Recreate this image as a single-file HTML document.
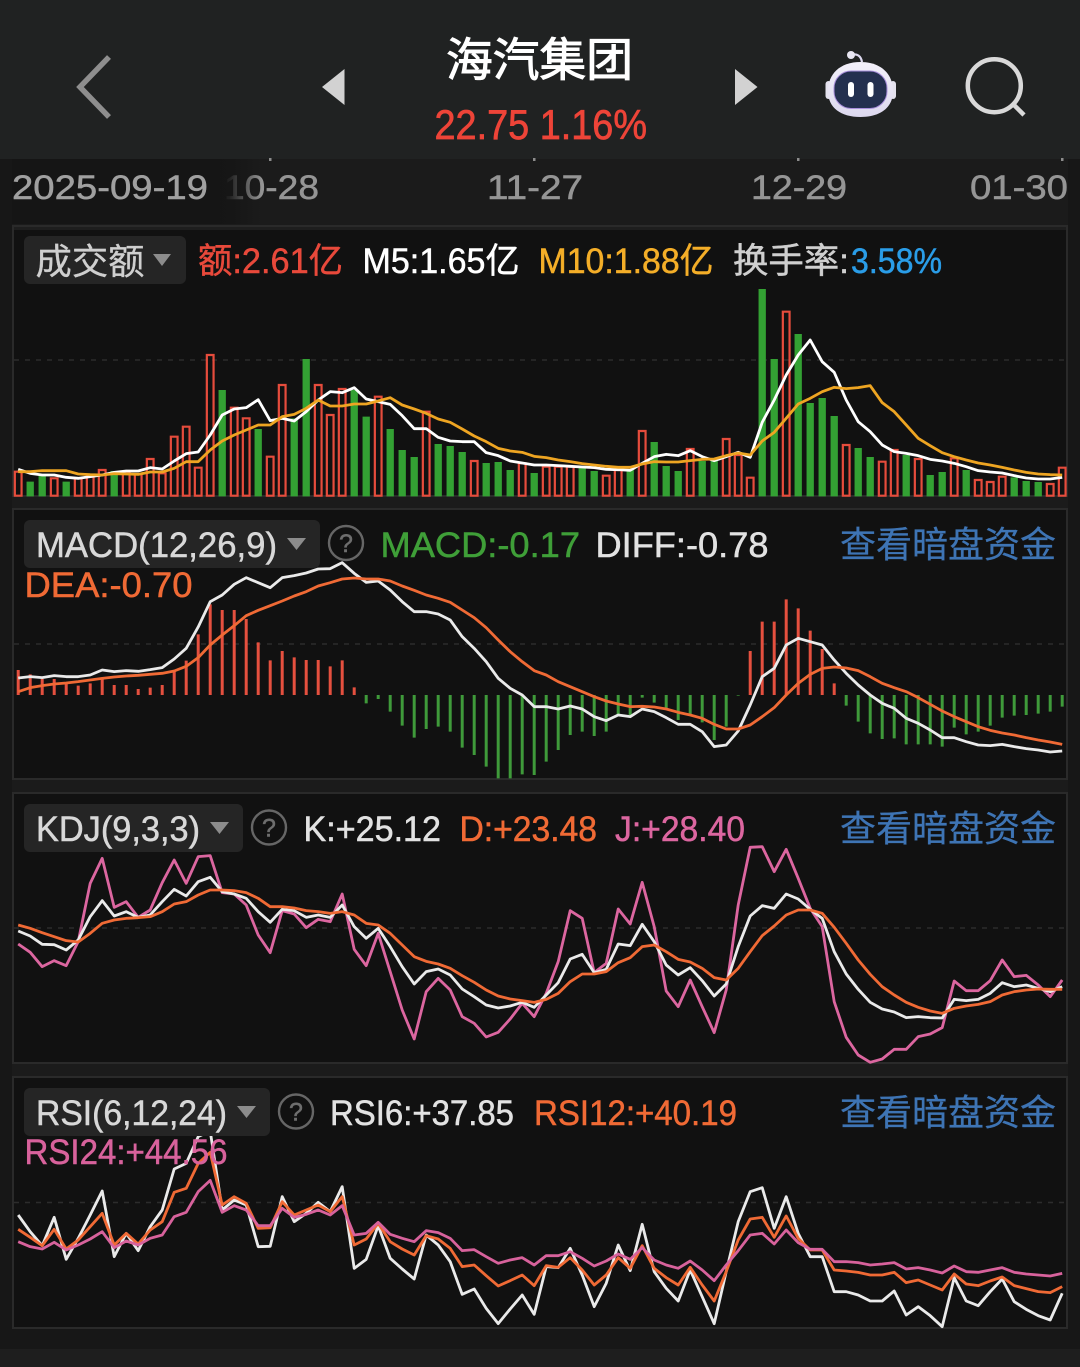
<!DOCTYPE html>
<html lang="zh"><head><meta charset="utf-8"><title>海汽集团</title>
<style>
html,body{margin:0;padding:0;background:#181818;width:1080px;height:1367px;overflow:hidden}
svg{display:block}
text{font-family:"Liberation Sans","Noto Sans CJK SC",sans-serif;font-size:35px;fill:currentColor;stroke:currentColor;stroke-width:.5}
.cjk{font-family:"Noto Sans CJK SC",sans-serif;stroke-width:.3}
.c polyline,.c path{vector-effect:non-scaling-stroke;fill:none}
.c polyline{stroke-width:2.8;stroke-linejoin:round}
</style></head><body>
<svg width="1080" height="1367" viewBox="0 0 1080 1367">
<defs><linearGradient id="fade" x1="0" x2="1" y1="0" y2="0"><stop offset="0" stop-color="#151515" stop-opacity="1"/><stop offset=".35" stop-color="#151515" stop-opacity=".9"/><stop offset="1" stop-color="#151515" stop-opacity="0"/></linearGradient>
<linearGradient id="hd" x1="0" x2="0" y1="0" y2="1"><stop offset="0" stop-color="#f3f1fa"/><stop offset="1" stop-color="#dcd8ee"/></linearGradient></defs>
<rect width="1080" height="1367" fill="#171717"/>
<rect x="12" y="159" width="1056" height="1169" fill="#1b1b1b"/>
<rect y="1349" width="1080" height="18" fill="#1e1e1e"/>
<rect width="1080" height="159" fill="#202222"/>

<!-- header -->
<polyline points="109,57 80,87 109,117" fill="none" stroke="#8e8e8e" stroke-width="5.500"/>
<path d="M344.500 69V105L322 87Z" fill="#d2d2d2"/>
<path d="M735 69V105L757.500 87Z" fill="#d2d2d2"/>
<text class="cjk" x="446" y="76" style="font-size:46px;stroke-width:1" color="#fff" textLength="187" lengthAdjust="spacingAndGlyphs">海汽集团</text>
<text x="434.500" y="139" style="font-size:42px;stroke-width:.7" color="#ee4438" textLength="212.500" lengthAdjust="spacingAndGlyphs">22.75 1.16%</text>
<!-- robot -->
<path d="M851 55C857 53 861 56 862 62" fill="none" stroke="#dcd8ee" stroke-width="2.200"/>
<circle cx="851" cy="55" r="4" fill="#e8e6f2"/>
<rect x="825.500" y="81" width="6" height="18" rx="3" fill="#e4e2ee"/>
<rect x="890" y="81" width="6" height="18" rx="3" fill="#e4e2ee"/>
<path d="M860.500 62C881 62 893 74 893 91C893 108 880 117 860.500 117C841 117 828 108 828 91C828 74 840 62 860.500 62Z" fill="url(#hd)"/>
<rect x="834" y="71" width="53" height="37.500" rx="17" fill="#24304f" stroke="#a98fdc" stroke-width="1"/>
<rect x="848" y="82" width="6" height="15" rx="3" fill="#fff"/>
<rect x="867.500" y="82" width="6" height="15" rx="3" fill="#fff"/>
<!-- search -->
<circle cx="994.300" cy="85.700" r="26.500" fill="none" stroke="#d9d9d9" stroke-width="4.500"/>
<path d="M1013 104L1024 115" stroke="#d9d9d9" stroke-width="4.500"/>

<!-- axis -->
<g fill="#8c8c8c"><rect x="269" y="158" width="2.500" height="3"/><rect x="533" y="158" width="2.500" height="3"/><rect x="797" y="158" width="2.500" height="3"/><rect x="1061" y="158" width="2.500" height="3"/></g>
<text style="font-size:34px" x="487" y="199" color="#959595" textLength="96" lengthAdjust="spacingAndGlyphs">11-27</text>
<text style="font-size:34px" x="751" y="199" color="#959595" textLength="96" lengthAdjust="spacingAndGlyphs">12-29</text>
<text style="font-size:34px" x="970" y="199" color="#959595" textLength="98" lengthAdjust="spacingAndGlyphs">01-30</text>
<text style="font-size:34px" x="224" y="199" color="#959595" textLength="95" lengthAdjust="spacingAndGlyphs">10-28</text>
<rect x="12" y="159" width="200" height="65" fill="#151515"/>
<rect x="212" y="159" width="50" height="65" fill="url(#fade)"/>
<text style="font-size:34px" x="12" y="199" color="#a0a0a0" textLength="196" lengthAdjust="spacingAndGlyphs">2025-09-19</text>

<!-- panels -->
<g fill="#111" stroke="#2a2a2a" stroke-width="2">
<rect x="13" y="226" width="1054" height="270"/>
<rect x="13" y="509" width="1054" height="270"/>
<rect x="13" y="793" width="1054" height="270"/>
<rect x="13" y="1077" width="1054" height="251"/>
</g>
<rect x="14" y="227" width="1052" height="3" fill="#1e1e1e"/>
<g stroke="#2c2c2c" stroke-width="1.500" stroke-dasharray="5 6">
<path d="M14 360H1066M14 644H1066M14 928H1066M14 1202.500H1066"/>
</g>

<!-- volume bars -->
<g class="c" transform="translate(18.200 225) scale(12 .33333)">
<path stroke="#33a133" stroke-width="7.300" d="M1 770V814M2 752V814M4 770V814M8 738V814M17 495V814M20 612V814M23 580V814M24 402V814M28 495V814M29 575V814M31 612V814M32 675V814M33 696V814M35 657V814M36 663V814M37 681V814M39 714V814M40 711V814M41 735V814M43 744V814M47 725V814M48 738V814M51 735V814M53 651V814M54 723V814M55 738V814M57 708V814M58 708V814M62 192V814M63 402V814M65 327V814M66 534V814M67 519V814M68 573V814M70 669V814M71 696V814M74 690V814M76 750V814M77 741V814M79 735V814M83 757V814M84 768V814M85 771V814"/>
<path stroke="#e64c3c" stroke-width="2.200" d="M-.28 740V812h.56V740zM2.720 760V812h.56V760zM4.720 760V812h.56V760zM5.720 755V812h.56V755zM6.720 735V812h.56V735zM8.720 740V812h.56V740zM9.720 748V812h.56V748zM10.720 702V812h.56V702zM11.720 745V812h.56V745zM12.720 635V812h.56V635zM13.720 605V812h.56V605zM14.720 728V812h.56V728zM15.720 390V812h.56V390zM17.720 548V812h.56V548zM18.720 580V812h.56V580zM20.720 695V812h.56V695zM21.720 480V812h.56V480zM24.720 480V812h.56V480zM25.720 570V812h.56V570zM26.720 492V812h.56V492zM29.720 515V812h.56V515zM33.720 560V812h.56V560zM37.720 708V812h.56V708zM41.720 715V812h.56V715zM43.720 725V812h.56V725zM44.720 725V812h.56V725zM45.720 725V812h.56V725zM48.720 752V812h.56V752zM49.720 735V812h.56V735zM51.720 618V812h.56V618zM55.720 672V812h.56V672zM58.720 642V812h.56V642zM59.720 690V812h.56V690zM60.720 758V812h.56V758zM63.720 260V812h.56V260zM68.720 660V812h.56V660zM71.720 710V812h.56V710zM72.720 675V812h.56V675zM74.720 702V812h.56V702zM77.720 700V812h.56V700zM79.720 765V812h.56V765zM80.720 771V812h.56V771zM81.720 755V812h.56V755zM85.720 777V812h.56V777zM86.720 728V812h.56V728z"/>
<polyline stroke="#fff" points="0,733 1,745 2,750 3,750 4,757 5,760 6,755 7,750 8,742 9,738 10,738 11,728 12,732 13,708 14,686 15,681 16,630 17,570 18,552 19,548 20,524 21,587 22,580 23,588 24,560 25,525 26,500 27,503 28,488 29,522 30,530 31,538 32,572 33,611 34,611 35,637 36,648 37,650 38,650 39,683 40,692 41,708 42,714 43,720 44,720 45,722 46,724 47,726 48,728 49,733 50,734 51,736 52,715 53,695 54,688 55,692 56,677 57,695 58,707 59,695 60,682 61,697 62,592 63,525 64,450 65,390 66,345 67,410 68,442 69,525 70,590 71,620 72,660 73,680 74,685 75,692 76,703 77,708 78,715 79,725 80,737 81,741 82,744 83,752 84,759 85,762 86,762 87,757"/>
<polyline stroke="#eea522" points="0,740 1,740 2,737 3,737 4,737 5,747 6,749 7,750 8,746 9,747 10,748 11,741 12,741 13,730 14,710 15,710 16,675 17,648 18,630 19,615 20,600 21,600 22,575 23,568 24,550 25,525 26,543 27,543 28,537 29,537 30,528 31,518 32,540 33,552 34,565 35,582 36,592 37,612 38,633 39,650 40,670 41,678 42,682 43,694 44,698 45,705 46,710 47,716 48,720 49,724 50,727 51,727 52,717 53,710 54,711 55,711 56,707 57,703 58,702 59,692 60,684 61,690 62,648 63,622 64,580 65,537 66,520 67,500 68,487 69,491 70,488 71,482 72,533 73,560 74,600 75,640 76,662 77,683 78,695 79,705 80,714 81,720 82,727 83,735 84,742 85,747 86,749 87,750"/>
</g>

<!-- MACD -->
<g class="c" transform="translate(18.200 505) scale(12 .33333)">
<path stroke="#e5503f" stroke-width="3" d="M0 495V570M1 508V570M2 522V570M3 522V570M4 535V570M5 542V570M6 535V570M7 522V570M8 540V570M9 540V570M10 552V570M11 548V570M12 540V570M13 498V570M14 467V570M15 388V570M16 298V570M17 315V570M18 315V570M19 342V570M20 412V570M21 466V570M22 438V570M23 457V570M24 465V570M25 465V570M26 484V570M27 466V570M28 547V570M61 438V570M62 350V570M63 350V570M64 283V570M65 310V570M66 377V570M67 432V570M68 535V570"/>
<path stroke="#3f9a3a" stroke-width="3" d="M29 570V595M30 570V582M31 570V620M32 570V662M33 570V698M34 570V672M35 570V665M36 570V680M37 570V728M38 570V750M39 570V785M40 570V820M41 570V820M42 570V808M43 570V810M44 570V770M45 570V735M46 570V690M47 570V680M48 570V693M49 570V680M50 570V630M51 570V630M52 570V578M53 570V593M54 570V612M55 570V645M56 570V630M57 570V652M58 570V705M59 570V665M60 570V572M69 570V602M70 570V650M71 570V685M72 570V702M73 570V700M74 570V718M75 570V718M76 570V718M77 570V725M78 570V668M79 570V688M80 570V680M81 570V662M82 570V638M83 570V632M84 570V630M85 570V626M86 570V620M87 570V605"/>
<polyline stroke="#eaeaea" points="0,519 1,515 2,518 3,512 4,515 5,515 6,510 7,495 8,500 9,497 10,499 11,494 12,488 13,462 14,430 15,366 16,290 17,270 18,238 19,218 20,233 21,248 22,218 23,212 24,204 25,192 26,191 27,173 28,205 29,232 30,228 31,255 32,290 33,320 34,320 35,327 36,345 37,395 38,430 39,470 40,520 41,550 42,570 43,605 44,605 45,612 46,603 47,612 48,635 49,647 50,630 51,635 52,612 53,620 54,638 55,658 56,658 57,680 58,725 59,720 60,678 61,600 62,515 63,490 64,420 65,400 66,410 67,420 68,465 69,505 70,540 71,570 72,595 73,610 74,640 75,655 76,675 77,698 78,698 79,710 80,720 81,722 82,718 83,725 84,731 85,735 86,741 87,738"/>
<polyline stroke="#f06a35" points="0,560 1,548 2,542 3,537 4,534 5,530 6,525 7,520 8,516 9,513 10,511 11,508 12,505 13,498 14,484 15,458 16,420 17,390 18,362 19,332 20,316 21,302 22,288 23,273 24,260 25,243 26,233 27,222 28,219 29,222 30,222 31,228 32,243 33,256 34,270 35,280 36,292 37,315 38,338 39,368 40,405 41,440 42,470 43,497 44,510 45,530 46,545 47,560 48,575 49,588 50,597 51,605 52,604 53,606 54,612 55,622 56,630 57,640 58,658 59,672 60,672 61,660 62,635 63,608 64,570 65,535 66,508 67,490 68,486 69,489 70,497 71,515 72,535 73,548 74,560 75,578 76,598 77,618 78,635 79,650 80,665 81,676 82,684 83,690 84,698 85,705 86,711 87,718"/>
</g>

<!-- KDJ -->
<g class="c" transform="translate(18.200 790) scale(12 .33333)">
<polyline stroke="#dc66a0" points="0,462 1,487 2,530 3,512 4,527 5,455 6,280 7,205 8,352 9,335 10,382 11,360 12,278 13,210 14,280 15,200 16,197 17,308 18,312 19,345 20,435 21,488 22,362 23,372 24,413 25,388 26,395 27,312 28,478 29,527 30,430 31,545 32,660 33,747 34,605 35,565 36,600 37,680 38,700 39,741 40,727 41,687 42,640 43,680 44,610 45,515 46,362 47,385 48,548 49,520 50,357 51,402 52,277 53,410 54,603 55,650 56,570 57,650 58,728 59,600 60,345 61,172 62,170 63,245 64,178 65,265 66,355 67,410 68,635 69,742 70,795 71,817 72,807 73,778 74,778 75,740 76,732 77,713 78,573 79,602 80,602 81,572 82,510 83,560 84,556 85,585 86,620 87,570"/>
<polyline stroke="#eaeaea" points="0,423 1,438 2,463 3,464 4,480 5,450 6,380 7,332 8,378 9,365 10,382 11,375 12,335 13,298 14,318 15,275 16,262 17,305 18,312 19,325 20,365 21,397 22,358 23,362 24,382 25,375 26,382 27,345 28,410 29,445 30,415 31,470 32,530 33,582 34,545 35,537 36,555 37,597 38,620 39,645 40,654 41,648 42,637 43,652 44,615 45,578 46,507 47,493 48,548 49,538 50,462 51,467 52,403 53,455 54,525 55,555 56,533 57,572 58,618 59,582 60,470 61,378 62,347 63,355 64,312 65,327 66,358 67,385 68,485 69,552 70,598 71,637 72,657 73,666 74,683 75,680 76,683 77,684 78,628 79,632 80,628 81,610 82,578 83,590 84,585 85,595 86,605 87,590"/>
<polyline stroke="#f06a35" points="0,405 1,415 2,428 3,440 4,452 5,456 6,430 7,400 8,390 9,385 10,383 11,380 12,365 13,342 14,335 15,315 16,300 17,300 18,302 19,308 20,325 21,350 22,350 23,354 24,362 25,365 26,370 27,365 28,375 29,400 30,405 31,430 32,465 33,500 34,514 35,522 36,535 37,557 38,577 39,600 40,618 41,627 42,632 43,637 44,628 45,610 46,575 47,552 48,552 49,545 50,518 51,503 52,470 53,465 54,485 55,508 56,516 57,535 58,563 59,570 60,535 61,485 62,437 63,408 64,375 65,360 66,360 67,370 68,412 69,460 70,510 71,553 72,590 73,615 74,637 75,652 76,663 77,670 78,655 79,648 80,643 81,635 82,615 83,605 84,600 85,597 86,598 87,598"/>
</g>

<!-- RSI -->
<g class="c" transform="translate(18.200 1075) scale(12 .33333)">
<polyline stroke="#eaeaea" points="0,420 1,470 2,512 3,427 4,553 5,490 6,420 7,348 8,545 9,475 10,527 11,455 12,405 13,282 14,265 15,185 16,168 17,405 18,375 19,390 20,515 21,514 22,365 23,440 24,415 25,382 26,410 27,335 28,580 29,553 30,452 31,550 32,582 33,612 34,480 35,510 36,560 37,658 38,642 39,700 40,746 41,702 42,660 43,718 44,575 45,578 46,520 47,600 48,695 49,625 50,510 51,587 52,448 53,590 54,640 55,678 56,585 57,665 58,746 59,590 60,440 61,350 62,338 63,460 64,365 65,475 66,545 67,545 68,650 69,650 70,660 71,678 72,678 73,648 74,720 75,695 76,722 77,755 78,608 79,678 80,692 81,650 82,612 83,680 84,703 85,722 86,735 87,655"/>
<polyline stroke="#f06a35" points="0,463 1,487 2,512 3,463 4,522 5,495 6,455 7,415 8,510 9,475 10,507 11,465 12,440 13,352 14,340 15,265 16,232 17,390 18,365 19,385 20,460 21,458 22,380 23,420 24,405 25,390 26,410 27,365 28,510 29,492 30,445 31,500 32,522 33,540 34,482 35,492 36,520 37,575 38,570 39,602 40,633 41,617 42,600 43,632 44,572 45,577 46,548 47,585 48,630 49,600 50,548 51,580 52,512 53,580 54,608 55,630 56,577 57,630 58,678 59,590 60,495 61,432 62,427 63,487 64,423 65,490 66,525 67,525 68,585 69,588 70,592 71,600 72,600 73,592 74,623 75,615 76,630 77,645 78,597 79,627 80,632 81,618 82,606 83,632 84,641 85,650 86,653 87,635"/>
<polyline stroke="#d8629c" points="0,500 1,515 2,522 3,502 4,525 5,510 6,492 7,470 8,518 9,498 10,510 11,490 12,480 13,425 14,412 15,350 16,316 17,412 18,392 19,405 20,452 21,452 22,400 23,427 24,418 25,405 26,420 27,392 28,480 29,475 30,442 31,478 32,490 33,500 34,467 35,473 36,490 37,527 38,524 39,545 40,565 41,555 42,548 43,570 44,542 45,542 46,530 47,550 48,573 49,558 50,537 51,553 52,518 53,555 54,570 55,580 56,558 57,585 58,617 59,570 60,527 61,480 62,475 63,507 64,465 65,503 66,523 67,523 68,560 69,560 70,563 71,570 72,567 73,563 74,582 75,578 76,585 77,594 78,573 79,590 80,592 81,585 82,578 83,592 84,597 85,600 86,603 87,595"/>
</g>

<!-- tags -->
<g fill="#252525">
<rect x="24" y="236" width="162" height="48" rx="6"/>
<rect x="24" y="520" width="296" height="48" rx="6"/>
<rect x="24" y="804" width="219" height="48" rx="6"/>
<rect x="24" y="1088" width="246" height="48" rx="6"/>
</g>
<g fill="#8c8c8c">
<path d="M153 254H171L162 266Z"/>
<path d="M287 538H306L296.500 550Z"/>
<path d="M210 822H229L219.500 834Z"/>
<path d="M237 1106H256L246.500 1118Z"/>
</g>
<g fill="none" stroke="#666" stroke-width="2.400">
<circle cx="346" cy="543" r="17"/>
<circle cx="269" cy="827.500" r="17"/>
<circle cx="296" cy="1111.500" r="17"/>
</g>
<text style="font-size:25px" x="339" y="552" color="#6e6e6e">?</text>
<text style="font-size:25px" x="262" y="836.500" color="#6e6e6e">?</text>
<text style="font-size:25px" x="289" y="1120.500" color="#6e6e6e">?</text>

<!-- labels -->
<text class="cjk" style="font-size:36px" x="35.500" y="274" color="#cfcfcf" textLength="109" lengthAdjust="spacingAndGlyphs">成交额</text>
<text x="198" y="273" color="#e8493b" textLength="145" lengthAdjust="spacingAndGlyphs">额:2.61亿</text>
<text x="362.500" y="273" color="#fff" textLength="157" lengthAdjust="spacingAndGlyphs">M5:1.65亿</text>
<text x="538.500" y="273" color="#f4ae28" textLength="175" lengthAdjust="spacingAndGlyphs">M10:1.88亿</text>
<text x="733" y="273" color="#cfcfcf" textLength="116" lengthAdjust="spacingAndGlyphs">换手率:</text>
<text x="851" y="273" color="#2a9de8" textLength="91" lengthAdjust="spacingAndGlyphs">3.58%</text>

<text x="36" y="557" color="#d8d8d8" textLength="241" lengthAdjust="spacingAndGlyphs">MACD(12,26,9)</text>
<text x="380.500" y="557" color="#3f9f38" textLength="199.500" lengthAdjust="spacingAndGlyphs">MACD:-0.17</text>
<text x="595.500" y="557" color="#e2e2e2" textLength="173" lengthAdjust="spacingAndGlyphs">DIFF:-0.78</text>
<text x="24.500" y="597" color="#f06a35" textLength="168" lengthAdjust="spacingAndGlyphs">DEA:-0.70</text>
<text class="cjk" style="font-size:36px" x="840" y="557" color="#3e74b4" textLength="216" lengthAdjust="spacingAndGlyphs">查看暗盘资金</text>

<text x="36" y="841" color="#d8d8d8" textLength="164" lengthAdjust="spacingAndGlyphs">KDJ(9,3,3)</text>
<text x="303.500" y="841" color="#e2e2e2" textLength="137.500" lengthAdjust="spacingAndGlyphs">K:+25.12</text>
<text x="459.500" y="841" color="#f06a35" textLength="137.500" lengthAdjust="spacingAndGlyphs">D:+23.48</text>
<text x="615" y="841" color="#dc66a0" textLength="130" lengthAdjust="spacingAndGlyphs">J:+28.40</text>
<text class="cjk" style="font-size:36px" x="840" y="841" color="#3e74b4" textLength="216" lengthAdjust="spacingAndGlyphs">查看暗盘资金</text>

<text x="36" y="1125" color="#d8d8d8" textLength="191" lengthAdjust="spacingAndGlyphs">RSI(6,12,24)</text>
<text x="330" y="1125" color="#e2e2e2" textLength="184" lengthAdjust="spacingAndGlyphs">RSI6:+37.85</text>
<text x="534" y="1125" color="#f06a35" textLength="203" lengthAdjust="spacingAndGlyphs">RSI12:+40.19</text>
<text x="24.500" y="1164" color="#d8629c" textLength="203" lengthAdjust="spacingAndGlyphs">RSI24:+44.56</text>
<text class="cjk" style="font-size:36px" x="840" y="1125" color="#3e74b4" textLength="216" lengthAdjust="spacingAndGlyphs">查看暗盘资金</text>
</svg>
</body></html>
